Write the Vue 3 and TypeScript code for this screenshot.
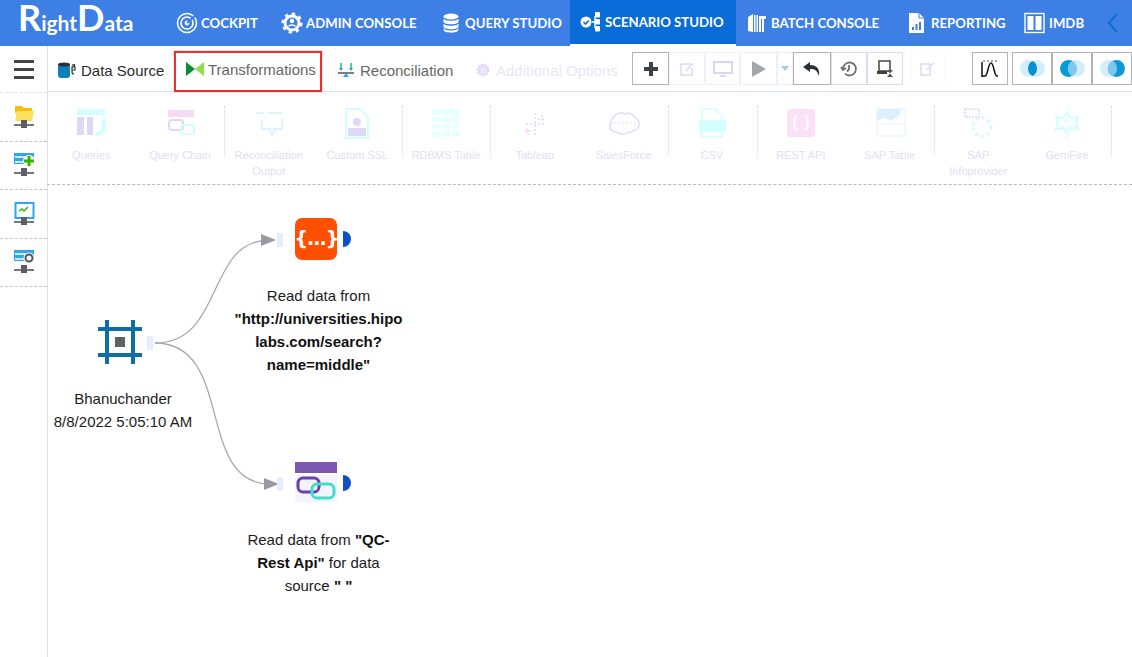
<script setup lang="ts">
interface NavItem {
  label: string
  icon: string
  active?: boolean
  width: number
}

interface PaletteItem {
  lines: string[]
  icon: string
  divider?: boolean
}

const navItems: NavItem[] = [
  { label: 'COCKPIT', width: 105, icon: '<circle cx="11" cy="11" r="9.5" fill="none" stroke="#fff" stroke-width="1.6"/><circle cx="11" cy="11" r="6" fill="none" stroke="#fff" stroke-width="1.6"/><circle cx="11" cy="11" r="2.4" fill="#fff"/><path d="M11 11 19 4" stroke="#3b7fe3" stroke-width="2"/>' },
  { label: 'ADMIN CONSOLE', width: 159, icon: '<circle cx="11" cy="11" r="7" fill="none" stroke="#fff" stroke-width="3"/><circle cx="11" cy="11" r="9.4" fill="none" stroke="#fff" stroke-width="2.4" stroke-dasharray="3.4 3.9"/><circle cx="11" cy="9" r="2.2" fill="#fff"/><path d="M7.5 14.5c1-2 6-2 7 0" fill="none" stroke="#fff" stroke-width="1.6"/>' },
  { label: 'QUERY STUDIO', width: 140, icon: '<g fill="#fff"><ellipse cx="11" cy="4.5" rx="7.5" ry="3"/><path d="M3.500 6.500c1 3 14 3 15 0v3.500c-1 3-14 3-15 0zM3.500 11.500c1 3 14 3 15 0v3.500c-1 3-14 3-15 0zM3.500 16.200c1 3 14 3 15 0v1.800c-1 3.500-14 3.500-15 0z"/></g>' },
  { label: 'SCENARIO STUDIO', width: 166, active: true, icon: '<circle cx="6" cy="11" r="5.500" fill="#fff"/><path d="M3.500 11l2 2 3.200-3.500" fill="none" stroke="#0a6cd8" stroke-width="1.600"/><path d="M12 11h3M15 5v12" stroke="#fff" stroke-width="1.400"/><g fill="#fff"><rect x="15" y="1" width="5" height="5.500" rx="1"/><rect x="15" y="8" width="5" height="5.500" rx="1"/><rect x="15" y="15" width="5" height="5.500" rx="1"/></g>' },
  { label: 'BATCH CONSOLE', width: 160, icon: '<g fill="#fff"><path d="M2 5l5-3v18l-5-1zM8 3h4v17H8zM13 4h7v3h-2v13h-5z"/></g><path d="M10 3v17M15.500 7v13" stroke="#3b7fe3"/>' },
  { label: 'REPORTING', width: 118, icon: '<path d="M3 1h10l5 5v15H3z" fill="#fff"/><path d="M13 1v5h5" fill="none" stroke="#3b7fe3"/><path d="M6 18v-3h2v3zM9.500 18v-6h2v6zM13 18v-8h2v8z" fill="#3b7fe3"/>' },
  { label: 'IMDB', width: 83, icon: '<rect x="1" y="1.500" width="19" height="19" fill="none" stroke="#fff" stroke-width="1.400"/><rect x="3.500" y="4" width="6" height="14" fill="#fff"/><rect x="11.500" y="4" width="6" height="14" fill="#fff"/>' }
]

const paletteItems: PaletteItem[] = [
  { lines: ['Queries'], icon: '<rect x="3" y="2" width="28" height="6" fill="#9ff"/><rect x="3" y="10" width="7" height="18" fill="#a9a0f0"/><rect x="13" y="10" width="6" height="18" fill="#a9a0f0"/><path d="M30 12v8a8 8 0 0 1-8 7" fill="none" stroke="#8ff" stroke-width="4"/>' },
  { lines: ['Query Chain'], icon: '<rect x="5" y="3" width="26" height="7" fill="#e6a8f0"/><rect x="6" y="13" width="14" height="10" rx="3" fill="none" stroke="#a9a0f0" stroke-width="2"/><rect x="18" y="18" width="13" height="9" rx="3" fill="none" stroke="#8ff" stroke-width="2"/>' },
  { lines: ['Reconciliation', 'Output'], divider: true, icon: '<path d="M4 6h8M16 6h14M10 12v10h20V12M16 22l4 6 4-6" fill="none" stroke="#a9e8f5" stroke-width="2"/>' },
  { lines: ['Custom SSL'], icon: '<path d="M6 2h14l8 8v21H6z" fill="none" stroke="#8ff" stroke-width="2"/><circle cx="17" cy="15" r="4" fill="#a9a0f0"/><rect x="8" y="21" width="18" height="8" fill="#a9a0f0"/>' },
  { lines: ['RDBMS Table'], divider: true, icon: '<rect x="3" y="2" width="28" height="28" fill="#c8ffff"/><path d="M3 9h28M3 16h28M3 23h28M12 9v21M22 9v21" stroke="#fff" stroke-width="2"/>' },
  { lines: ['Tableau'], divider: true, icon: '<path d="M17 6v22M8 17h18M24 8v8M20 12h8M11 23v5" stroke="#b8a8f0" stroke-width="1.500" stroke-dasharray="2 2"/><path d="M6 24h6M9 21v6" stroke="#f0a8f0" stroke-width="1.500"/>' },
  { lines: ['SalesForce'], icon: '<path d="M8 10c3-5 8-5 11-3 4-2 9 0 10 4 4 1 6 7 2 11-3 3-7 2-10 4-4 2-8 1-10-1-6 0-9-5-6-9 0-3 1-5 3-6z" fill="none" stroke="#b8a8f0" stroke-width="1.500"/><path d="M4 16h27" stroke="#b8a8f0" stroke-dasharray="2 2"/>' },
  { lines: ['CSV'], divider: true, icon: '<path d="M7 13V2h13l7 7v4M7 24v6h20v-6" fill="none" stroke="#8ff" stroke-width="1.500"/><rect x="4" y="13" width="27" height="12" rx="1" fill="#9ff"/>' },
  { lines: ['REST API'], divider: true, icon: '<rect x="3" y="2" width="28" height="28" rx="4" fill="#f8b0ee"/><path d="M13 9c-3 0-2 4-3 7 1 3 0 7 3 7M21 9c3 0 2 4 3 7-1 3 0 7-3 7" fill="none" stroke="#fff" stroke-width="2"/>' },
  { lines: ['SAP Table'], icon: '<rect x="4" y="2" width="28" height="27" fill="none" stroke="#c8f0f5" stroke-width="1.500"/><path d="M4 2h23v6l-9 6-6-3-8 2z" fill="#a8dcf8"/><path d="M4 17h28" stroke="#c8f0f5"/>' },
  { lines: ['SAP', 'Infoprovider'], divider: true, icon: '<path d="M4 2h14v8H4z" fill="none" stroke="#a9a0f0" stroke-width="1.500" stroke-dasharray="2 1"/><circle cx="21" cy="20" r="9" fill="none" stroke="#a8f0f5" stroke-width="3" stroke-dasharray="3 3"/>' },
  { lines: ['GemFire'], icon: '<path d="M17 1v31M5 9l24 15M29 9 5 24" stroke="#9ff" stroke-width="1.500" stroke-dasharray="4 5"/><path d="M17 6l4 5 7-1-2 6 2 6-7-1-4 5-4-5-7 1 2-6-2-6 7 1z" fill="none" stroke="#8ff" stroke-width="2"/>' }
]

const vennItems = [
  { id: 'inner', left: '#d2eefb', right: '#d2eefb', lens: '#0b8fcf' },
  { id: 'left', left: '#0b9ad8', right: '#d2eefb', lens: '#7cc8ee' },
  { id: 'right', left: '#d2eefb', right: '#0b9ad8', lens: '#7cc8ee' }
]

const sideItems = ['folder', 'add', 'monitor', 'settings']
</script>

<template>
  <div class="app">
    <header class="topbar">
      <div class="logo"><span class="big">R</span>ight<span class="big">D</span>ata</div>
      <nav class="nav">
        <a
          v-for="item in navItems"
          :key="item.label"
          class="nav-item"
          :class="{ active: item.active }"
          :style="{ width: item.width + 'px' }"
        >
          <svg width="22" height="22" viewBox="0 0 22 22" v-html="item.icon"></svg>
          <span>{{ item.label }}</span>
        </a>
      </nav>
      <svg class="collapse" width="12" height="24" viewBox="0 0 12 24">
        <path d="M10 3 2 12l8 9" fill="none" stroke="#0f6fd8" stroke-width="2.200" />
      </svg>
    </header>

    <div class="body">
      <aside class="sidebar">
        <div class="side-row burger">
          <span></span><span></span><span></span>
        </div>
        <div v-for="s in sideItems" :key="s" class="side-row">
          <svg width="24" height="26" viewBox="0 0 24 26">
            <template v-if="s === 'folder'">
              <path d="M3 2h7l2 2h8v5H3z" fill="#f5c010" />
              <path d="M5 7h17l-2 10H3z" fill="#ffe05a" />
            </template>
            <template v-else-if="s === 'add'">
              <rect x="2" y="1" width="20" height="11" fill="#2ea6e8" />
              <path d="M3 5h11M3 10h11" stroke="#fff" stroke-width="1.500" />
              <circle cx="17" cy="9" r="6" fill="#fff" />
              <path d="M17 4v10M12 9h10" stroke="#2fb800" stroke-width="3" />
            </template>
            <template v-else-if="s === 'monitor'">
              <rect x="3.500" y="2" width="18" height="15" fill="#fff" stroke="#2ea6e8" stroke-width="2" />
              <path d="M7 10l3-2 2 2 4-4" fill="none" stroke="#2fb800" stroke-width="1.400" />
            </template>
            <template v-else>
              <rect x="2" y="1" width="20" height="11" fill="#2ea6e8" />
              <path d="M3 5h11M3 10h11" stroke="#fff" stroke-width="1.500" />
              <circle cx="17" cy="9" r="5.500" fill="#fff" />
              <circle cx="17" cy="9" r="3.500" fill="none" stroke="#555" stroke-width="2" />
            </template>
            <path d="M2 21h20" stroke="#777" stroke-width="2" />
            <rect x="9" y="16" width="6" height="8" fill="#5c6066" />
          </svg>
        </div>
      </aside>

      <main class="main">
        <div class="toolbar">
          <a class="tab tab-source">
            <svg width="20" height="18" viewBox="0 0 20 18">
              <rect x="1" y="2" width="12" height="15" rx="3" fill="#0f7fb8" />
              <ellipse cx="7" cy="3.500" rx="6" ry="2" fill="#27303a" />
              <path d="M15 6v5a2 2 0 0 0 2 2M15 6h3v3h-3zM16 3v3M17.500 3v3" fill="none" stroke="#333" stroke-width="1.200" />
            </svg>
            Data Source
          </a>
          <a class="tab tab-trans">
            <svg width="20" height="16" viewBox="0 0 20 16">
              <path d="M1 1l9 7-9 7z" fill="#0c8a3a" />
              <path d="M19 1l-9 7 9 7z" fill="#8fe04a" />
            </svg>
            Transformations
          </a>
          <a class="tab tab-recon">
            <svg width="18" height="16" viewBox="0 0 18 16">
              <path d="M4 1v7M14 1v7" stroke="#20b890" stroke-width="1.500" />
              <path d="M2 6l2 3 2-3M12 6l2 3 2-3" fill="#20b890" />
              <path d="M1 11h16" stroke="#555" stroke-width="1.500" />
              <path d="M9 11l3 4H6z" fill="#2ea6e8" />
            </svg>
            Reconciliation
          </a>
          <a class="tab tab-extra">
            <svg width="16" height="16" viewBox="0 0 16 16">
              <circle cx="8" cy="8" r="5" fill="#efe4fb" stroke="#e0d6f5" stroke-width="3" stroke-dasharray="2 1" />
            </svg>
            Additional Options
          </a>

          <div class="tools">
            <button class="tool on w37">
              <svg width="16" height="16" viewBox="0 0 16 16"><path d="M8 1v14M1 8h14" stroke="#3c4048" stroke-width="4" /></svg>
            </button>
            <button class="tool faint w36">
              <svg width="18" height="18" viewBox="0 0 18 18"><path d="M3 4h9M3 4v11h11V8M8 11l7-8" fill="none" stroke="#ddd8f5" stroke-width="1.500" /></svg>
            </button>
            <button class="tool faint w35">
              <svg width="20" height="18" viewBox="0 0 20 18"><path d="M1 2h18v11H1zM7 16h6" fill="none" stroke="#d8d6f0" stroke-width="2" /></svg>
            </button>
            <button class="tool light w37">
              <svg width="16" height="18" viewBox="0 0 16 18"><path d="M1 1l14 8-14 8z" fill="#a3a6aa" /></svg>
            </button>
            <button class="tool light w16">
              <svg width="8" height="5" viewBox="0 0 8 5"><path d="M0 0h8L4 5z" fill="#a8c8f0" /></svg>
            </button>
            <button class="tool on w38">
              <svg width="20" height="16" viewBox="0 0 20 16"><path d="M8 1 1 6l7 5V8c5 0 7 1 9 7 1-7-2-11-9-11z" fill="#2a3038" /></svg>
            </button>
            <button class="tool mid w36">
              <svg width="18" height="18" viewBox="0 0 18 18"><path d="M3 9a6.500 6.500 0 1 1 2 4.700M1 7l2 3 3-2M9 5v4.500l-2 2" fill="none" stroke="#6c6e74" stroke-width="1.800" /></svg>
            </button>
            <button class="tool mid w36">
              <svg width="18" height="18" viewBox="0 0 18 18"><path d="M3 1h11v10H3z" fill="none" stroke="#444" stroke-width="1.500" /><path d="M1 11h10v3H1z" fill="#3c4048" /><path d="M11 10h6l-6 7h6z" fill="#555" /></svg>
            </button>
            <button class="tool faint edit-last">
              <svg width="18" height="18" viewBox="0 0 18 18"><path d="M2 4h9v11H2zM7 10l8-7" fill="none" stroke="#ddd8f5" stroke-width="1.500" /></svg>
            </button>
            <button class="tool on chart">
              <svg width="20" height="18" viewBox="0 0 20 18"><path d="M2 2v15M2 16h3c3 0 3-13 6-13s3 13 6 13h1" fill="none" stroke="#111" stroke-width="1.500" /><path d="M3 1h14" stroke="#555" stroke-dasharray="2 2" /></svg>
            </button>
            <div class="venn">
              <button v-for="v in vennItems" :key="v.id" class="tool on w40">
                <svg width="25" height="17" viewBox="0 0 25 17">
                  <circle cx="8.500" cy="8.500" r="8.500" :fill="v.left" />
                  <circle cx="16.500" cy="8.500" r="8.500" :fill="v.right" />
                  <path d="M12.500 1A8.500 8.500 0 0 1 12.500 16A8.500 8.500 0 0 1 12.500 1z" :fill="v.lens" />
                </svg>
              </button>
            </div>
          </div>
        </div>

        <div class="palette">
          <div
            v-for="p in paletteItems"
            :key="p.lines[0]"
            class="palette-item"
            :class="{ divided: p.divider }"
          >
            <svg width="34" height="32" viewBox="0 0 34 32" v-html="p.icon"></svg>
            <span v-for="line in p.lines" :key="line">{{ line }}</span>
          </div>
          <div class="palette-end"></div>
        </div>

        <div class="canvas">
          <svg class="wires" width="400" height="320" viewBox="48 185 400 320">
            <path d="M155 343C225 343 205 240 270 240" fill="none" stroke="#aaa8b8" stroke-width="1.300" />
            <path d="M155 343C235 343 195 484 270 484" fill="none" stroke="#aaa8b8" stroke-width="1.300" />
            <path d="M261 234l15 6-15 6z" fill="#9a9aa2" />
            <path d="M264 478l15 6-15 6z" fill="#9a9aa2" />
            <rect x="147" y="336" width="6" height="14" fill="#e6edfc" />
            <rect x="277" y="233" width="6" height="14" fill="#e6edfc" />
            <rect x="277" y="477" width="6" height="14" fill="#e6edfc" />
          </svg>

          <div class="node node-start">
            <svg width="44" height="44" viewBox="0 0 44 44">
              <path d="M9 0v44M35 0v44M0 9h44M0 35h44" stroke="#0f6fa5" stroke-width="4" />
              <rect x="17" y="17" width="10" height="10" fill="#5c6360" />
            </svg>
            <p>Bhanuchander 8/8/2022 5:05:10 AM</p>
          </div>

          <div class="node node-json">
            <div class="json-icon">{...}</div>
            <span class="port"></span>
            <p>Read data from <b>"http://universities.hipolabs.com/search?name=middle"</b></p>
          </div>

          <div class="node node-rest">
            <svg class="rest-icon" width="42" height="40" viewBox="0 0 42 40">
              <rect width="42" height="11" fill="#7d58b0" />
              <rect y="13" width="42" height="27" fill="#f4f4fe" />
              <rect x="3" y="16" width="21" height="14" rx="5" fill="none" stroke="#6a3fb0" stroke-width="3" />
              <rect x="17" y="22" width="22" height="14" rx="5" fill="none" stroke="#45dcc8" stroke-width="3" />
            </svg>
            <span class="port"></span>
            <p>Read data from <b>"QC-Rest Api"</b> for data source <b>" "</b></p>
          </div>
        </div>
      </main>
    </div>

    <div class="highlight"></div>
  </div>
</template>

<style>
html,
body {
  margin: 0;
  background: #fff;
}
</style>

<style scoped>
.app {
  position: relative;
  width: 1132px;
  height: 657px;
  overflow: hidden;
  font-family: "Liberation Sans", Arial, sans-serif;
  color: #222;
  display: flex;
  flex-direction: column;
}

.topbar {
  height: 46px;
  flex: none;
  background: #3d7fe4;
  display: flex;
  align-items: center;
  color: #fff;
}

.logo {
  width: 166px;
  flex: none;
  padding-left: 18px;
  box-sizing: border-box;
  font: 700 21px/46px Lato, sans-serif;
  white-space: nowrap;
}

.big {
  font-size: 36px;
  line-height: 30px;
}

.nav {
  display: flex;
  flex: none;
  align-self: stretch;
}

.nav-item {
  display: flex;
  align-items: center;
  gap: 3px;
  padding-left: 10px;
  box-sizing: border-box;
  flex: none;
  font: 700 13.200px Lato, sans-serif;
  white-space: nowrap;
}

.nav-item.active {
  background: #0a6cd8;
  border-bottom: 2px solid #fff;
}

.collapse {
  flex: none;
  margin-left: 10px;
}

.body {
  flex: 1;
  display: flex;
  min-height: 0;
}

.sidebar {
  width: 47px;
  flex: none;
  border-right: 1px solid #e2e0f6;
}

.side-row {
  height: 48.500px;
  box-sizing: border-box;
  border-bottom: 1px dashed #c4c4c4;
  display: flex;
  align-items: center;
  justify-content: center;
}

.burger {
  flex-direction: column;
  gap: 5px;
  height: 47px;
  border-bottom-color: #e2e0f6;
}

.burger span {
  width: 20px;
  height: 3px;
  background: #444;
}

.main {
  flex: 1;
  min-width: 0;
  display: flex;
  flex-direction: column;
}

.toolbar {
  height: 46px;
  flex: none;
  box-sizing: border-box;
  border-bottom: 1px solid #e2e0f6;
  display: flex;
  align-items: center;
  padding: 3px 0 0 9px;
}

.tab {
  display: flex;
  align-items: center;
  flex: none;
  font-size: 15px;
  white-space: nowrap;
}

.tab-source {
  gap: 4px;
  color: #2c2c2c;
  width: 128px;
}

.tab-trans {
  gap: 3px;
  color: #666;
  width: 152px;
  margin-bottom: 2px;
}

.tab-recon {
  gap: 5px;
  color: #666;
  width: 138px;
}

.tab-extra {
  gap: 5px;
  color: #eae6f8;
  width: 157px;
}

.tools {
  display: flex;
  align-items: center;
  height: 33px;
  margin-bottom: 3px;
}

.tool {
  height: 33px;
  padding: 0;
  flex: none;
  background: #fff;
  display: flex;
  align-items: center;
  justify-content: center;
  box-sizing: border-box;
  border: 1px dotted #e6e4f6;
}

.tool.on {
  border: 1px solid #b4b4b4;
}

.tool.mid {
  border: 1px solid #dcdaf4;
}

.tool.light {
  border: 1px dotted #d8e4f8;
}

.w16 {
  width: 16px;
}

.w35 {
  width: 35px;
}

.w36 {
  width: 36px;
}

.w37 {
  width: 37px;
}

.w38 {
  width: 38px;
}

.w40 {
  width: 40px;
}

.edit-last {
  width: 34px;
  margin-left: 8px;
  border-color: #f4f2fc;
}

.chart {
  width: 36px;
  margin-left: 27px;
}

.venn {
  display: flex;
  margin-left: 4px;
}

.palette {
  height: 93px;
  flex: none;
  box-sizing: border-box;
  border-bottom: 1px dashed #b9b9b9;
  display: flex;
  margin-left: -1px;
}

.palette-item {
  width: 88.700px;
  flex: none;
  box-sizing: border-box;
  padding-top: 15px;
  display: flex;
  flex-direction: column;
  align-items: center;
  font-size: 11px;
  line-height: 16px;
  color: #e2def6;
  position: relative;
}

.palette-item svg {
  margin-bottom: 8px;
  opacity: 0.4;
}

.palette-item.divided::before,
.palette-end::before {
  content: "";
  position: absolute;
  left: 0;
  top: 14px;
  height: 50px;
  border-left: 1px dotted #d6d2f2;
}

.palette-end {
  position: relative;
  flex: none;
  width: 1px;
}

.canvas {
  flex: 1;
  position: relative;
  overflow: hidden;
}

.wires {
  position: absolute;
  left: 0;
  top: 0;
}

.node {
  position: absolute;
  display: flex;
  flex-direction: column;
  align-items: center;
  font-size: 15px;
  line-height: 23px;
  text-align: center;
}

.node p {
  margin: 0;
  word-break: break-word;
  color: #1c1c1c;
}

.node b {
  color: #111;
}

.node-start {
  left: -5px;
  top: 135px;
  width: 160px;
}

.node-start svg {
  margin-right: 7px;
}

.node-start p {
  margin-top: 23px;
}

.node-json {
  left: 185px;
  top: 33px;
  width: 171px;
}

.node-json p {
  margin-top: 24px;
}

.json-icon {
  width: 42px;
  height: 42px;
  margin-right: 6px;
  border-radius: 7px;
  background: #ff4f00;
  color: #fff;
  font: 700 19px/40px "DejaVu Sans", sans-serif;
  letter-spacing: -1px;
}

.node-rest {
  left: 185px;
  top: 277px;
  width: 171px;
}

.rest-icon {
  margin-right: 6px;
}

.node-rest p {
  margin: 26px 12px 0;
}

.port {
  position: absolute;
  left: 110px;
  top: 13px;
  width: 8px;
  height: 16px;
  border-radius: 0 8px 8px 0;
  background: #0f4fc8;
}

.highlight {
  position: absolute;
  left: 174px;
  top: 51px;
  width: 144px;
  height: 37px;
  border: 2px solid #f03028;
  box-shadow: 0 0 0 1px #e6e4f8;
}
</style>
